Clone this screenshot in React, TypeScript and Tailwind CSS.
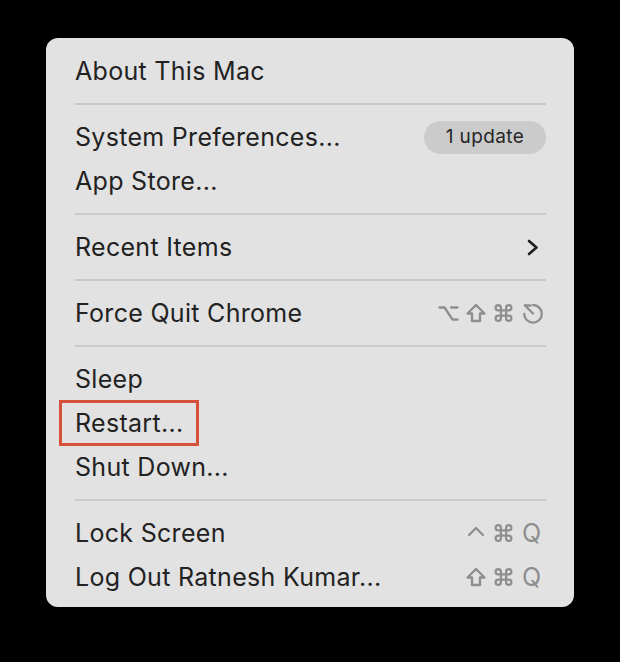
import React from "react";

const G = "#8e8e8e";

function Option() {
  return (
    <svg width="21" height="22" viewBox="0 0 21 22" fill="none" stroke={G} strokeWidth="2.3" strokeLinecap="round" strokeLinejoin="round">
      <path d="M1.5 5.5 H6.5 L14.5 17.5 H19.5" />
      <path d="M13 5.5 H19.5" />
    </svg>
  );
}
function Shift() {
  return (
    <svg width="20" height="22" viewBox="0 0 20 22" fill="none" stroke={G} strokeWidth="2.3" strokeLinejoin="round">
      <path d="M10 3 L18.5 11.5 H14 V19 H6 V11.5 H1.5 Z" />
    </svg>
  );
}
function Cmd() {
  return (
    <svg width="21" height="22" viewBox="0 0 24 24" fill="none" stroke={G} strokeWidth="2.5" strokeLinecap="round" strokeLinejoin="round">
      <path d="M15 6v12a3 3 0 1 0 3-3H6a3 3 0 1 0 3 3V6a3 3 0 1 0-3 3h12a3 3 0 1 0-3-3" />
    </svg>
  );
}
function Esc() {
  return (
    <svg width="23" height="23" viewBox="0 0 23 23" fill="none" stroke={G} strokeWidth="2.3" strokeLinecap="round" strokeLinejoin="round">
      <path d="M12 3 A8.8 8.8 0 1 1 3.2 11.8" />
      <path d="M4 3.5 L12 11.5" />
      <path d="M4 3.5 H9.5" />
    </svg>
  );
}
function Ctrl() {
  return (
    <svg width="20" height="22" viewBox="0 0 20 22" fill="none" stroke={G} strokeWidth="2.3" strokeLinecap="round" strokeLinejoin="round">
      <path d="M3 13 L10 6 L17 13" />
    </svg>
  );
}
function Q() {
  return <span className="text-[25px] leading-none text-[#8e8e8e] w-[21px] text-center">Q</span>;
}

function Sep() {
  return (
    <div className="h-[22px] flex items-center">
      <div className="h-[2px] w-full bg-[#c9c9c9]" />
    </div>
  );
}

function Row({ label, right, children }: { label: string; right?: React.ReactNode; children?: React.ReactNode }) {
  return (
    <div className="relative h-[44px] flex items-center justify-between">
      <span className="text-[25px] tracking-[0.3px] text-[#222222] leading-none">{label}</span>
      {right}
      {children}
    </div>
  );
}

export default function App() {
  return (
    <div className="min-h-[662px] w-[620px] bg-black pt-[38px] pl-[46px]" style={{ fontFamily: "Inter, 'Noto Sans', sans-serif" }}>
      <div className="w-[528px] rounded-[12px] bg-[#e2e2e2] pt-[11px] pb-[8px] pl-[29px] pr-[28px]">
        <Row label="About This Mac" />
        <Sep />
        <Row
          label="System Preferences..."
          right={
            <span className="h-[33px] w-[122px] rounded-full bg-[#cbcbcb] flex items-center justify-center text-[19px] tracking-[0.4px] text-[#262626]">
              1 update
            </span>
          }
        />
        <Row label="App Store..." />
        <Sep />
        <Row
          label="Recent Items"
          right={
            <svg className="mr-[7px]" width="12" height="17" viewBox="0 0 12 17" fill="none" stroke="#1f1f1f" strokeWidth="2.6" strokeLinecap="round" strokeLinejoin="round">
              <path d="M2 2 L9.5 8.5 L2 15" />
            </svg>
          }
        />
        <Sep />
        <Row
          label="Force Quit Chrome"
          right={
            <span className="flex items-center gap-[7px] pr-[2px]">
              <Option />
              <Shift />
              <Cmd />
              <Esc />
            </span>
          }
        />
        <Sep />
        <Row label="Sleep" />
        <Row label="Restart...">
          <div className="absolute left-[-16px] top-[-1px] w-[140px] h-[46px] border-[3px] border-[#d6503b]" />
        </Row>
        <Row label="Shut Down..." />
        <Sep />
        <Row
          label="Lock Screen"
          right={
            <span className="flex items-center gap-[7px] pr-[4px]">
              <Ctrl />
              <Cmd />
              <Q />
            </span>
          }
        />
        <Row
          label="Log Out Ratnesh Kumar..."
          right={
            <span className="flex items-center gap-[7px] pr-[4px]">
              <Shift />
              <Cmd />
              <Q />
            </span>
          }
        />
      </div>
    </div>
  );
}
